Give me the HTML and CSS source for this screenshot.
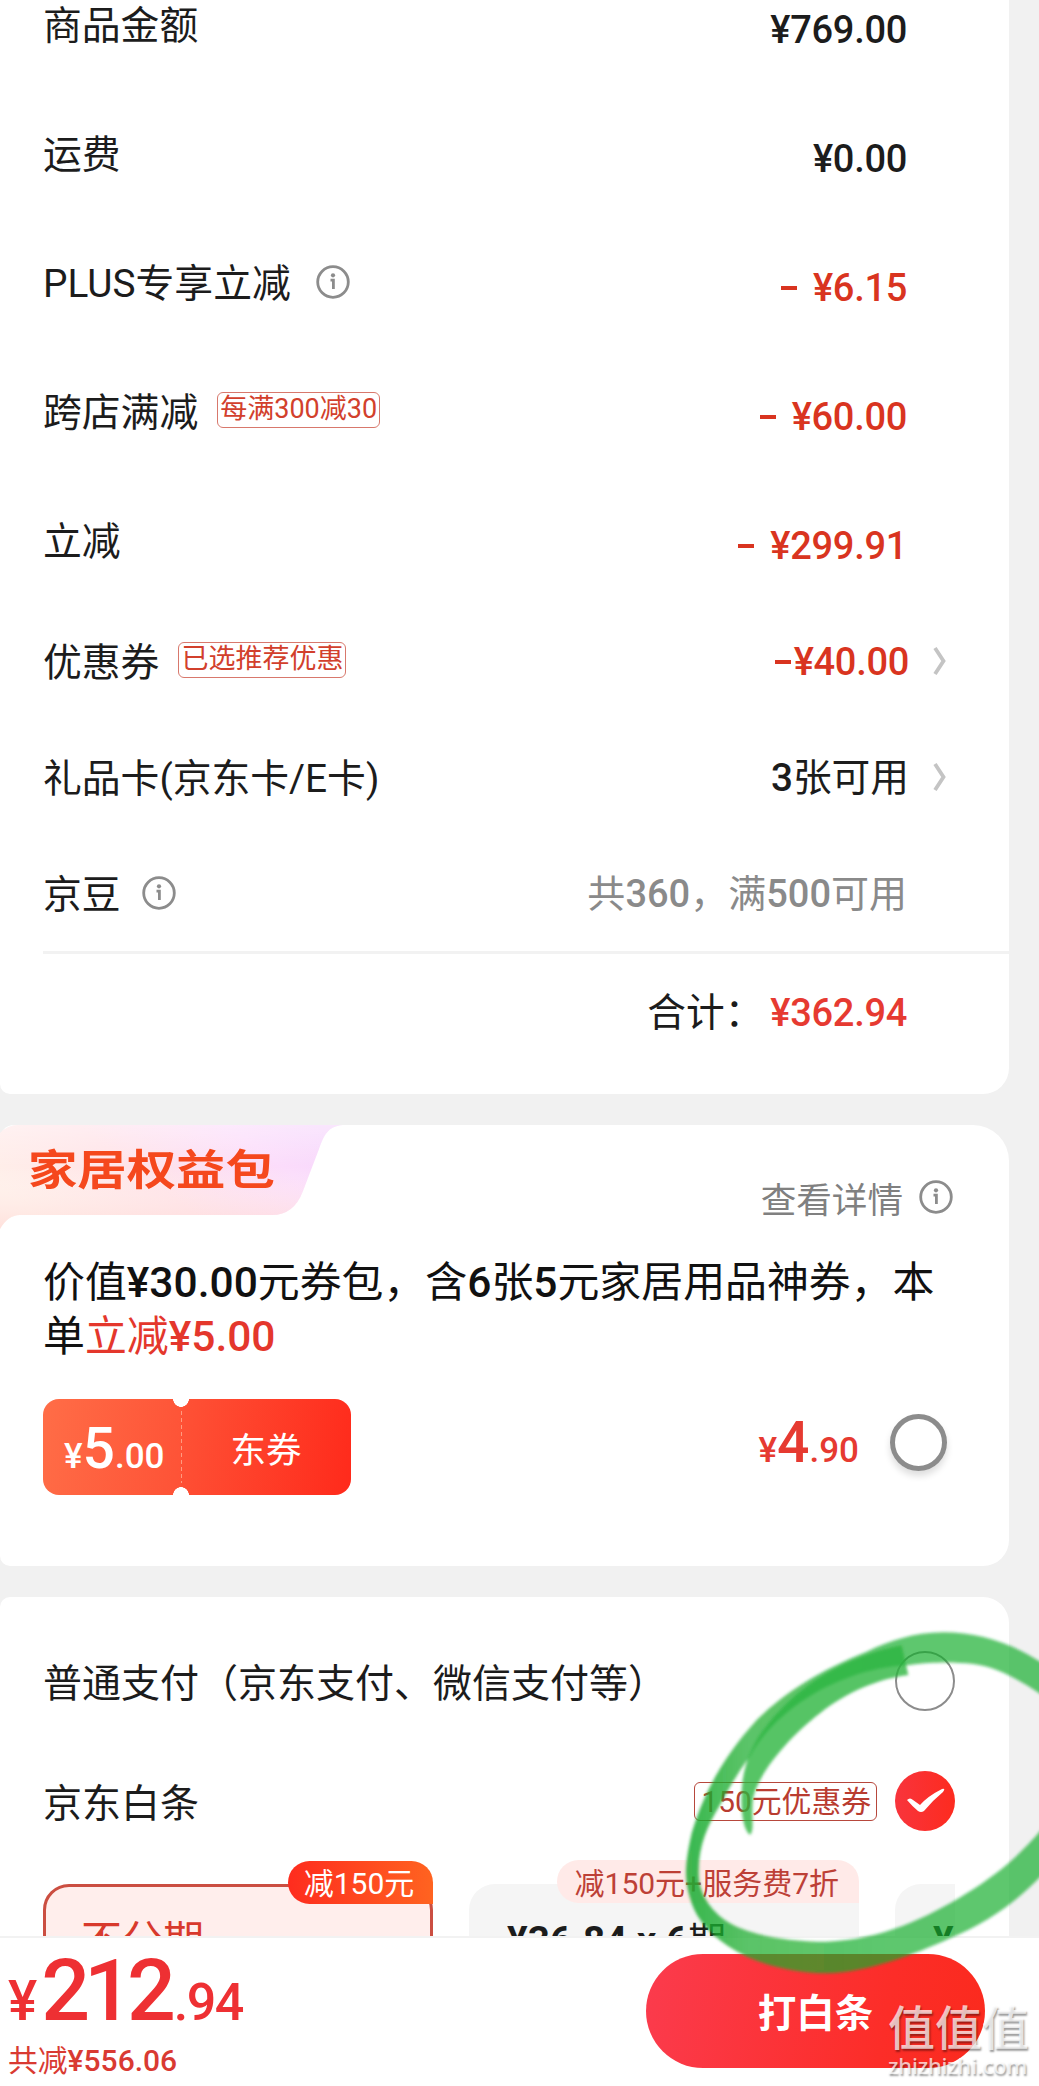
FILE: index.html
```
<!DOCTYPE html>
<html lang="zh-CN">
<head>
<meta charset="utf-8">
<title>确认订单</title>
<link rel="stylesheet" href="styles.css">
</head>
<body>
<svg width="0" height="0" class="defs">
  <symbol id="info" viewBox="0 0 34 34">
    <circle cx="17" cy="17" r="15.3" fill="none" stroke="#8c8c8c" stroke-width="2.8"/>
    <circle cx="17" cy="10.3" r="2.1" fill="#8c8c8c"/>
    <path d="M14.500 15.2H17.400V24" fill="none" stroke="#8c8c8c" stroke-width="2.8"/>
  </symbol>
  <symbol id="chev" viewBox="0 0 14 30">
    <path d="M2 2L10.500 15L2 28" fill="none" stroke="#c4c4c4" stroke-width="3.800"/>
  </symbol>
</svg>
<div class="screen">
  <section class="card summary">
    <div class="row tall"><span class="name">商品金额</span><span class="num">¥769.00</span></div>
    <div class="row tall"><span class="name">运费</span><span class="num">¥0.00</span></div>
    <div class="row tall"><span class="name">PLUS专享立减</span><svg class="info gap-wide"><use href="#info"/></svg><span class="num red"><i class="dash"></i>¥6.15</span></div>
    <div class="row tall"><span class="name">跨店满减</span><span class="tag">每满300减30</span><span class="num red"><i class="dash"></i>¥60.00</span></div>
    <div class="row tall last-tall"><span class="name">立减</span><span class="num red"><i class="dash"></i>¥299.91</span></div>
    <div class="row link"><span class="name">优惠券</span><span class="tag">已选推荐优惠</span><span class="num red"><i class="dash tight"></i>¥40.00</span><svg class="chev"><use href="#chev"/></svg></div>
    <div class="row link"><span class="name">礼品卡(京东卡/E卡)</span><span class="num mixed"><b>3</b>张可用</span><svg class="chev"><use href="#chev"/></svg></div>
    <div class="row"><span class="name">京豆</span><svg class="info"><use href="#info"/></svg><span class="num mixed grey">共<b>360</b>，满<b>500</b>可用</span></div>
    <div class="row total"><span class="total-label">合计：</span><span class="num red bright">¥362.94</span></div>
  </section>

  <section class="card benefit">
    <svg class="banner" viewBox="0 0 343 104">
      <defs>
        <linearGradient id="pink" x1="0" y1="0.6" x2="1" y2="0.2">
          <stop offset="0" stop-color="#fff0e9"/><stop offset=".4" stop-color="#ffe3e8"/><stop offset=".78" stop-color="#fbdcfb"/><stop offset="1" stop-color="#f6d6fc"/>
        </linearGradient>
        <linearGradient id="warm" x1="0" y1="0" x2="0" y2="1">
          <stop offset="0" stop-color="#fff" stop-opacity=".4"/><stop offset=".4" stop-color="#fff" stop-opacity="0"/><stop offset="1" stop-color="#ffd6d3" stop-opacity=".6"/>
        </linearGradient>
      </defs>
      <path d="M0 8Q8 0 18 0H343C328 1 324 10 319 24L303 66Q294 90 272 90H20Q8 90 0 104Z" fill="url(#pink)"/>
      <path d="M0 8Q8 0 18 0H343C328 1 324 10 319 24L303 66Q294 90 272 90H20Q8 90 0 104Z" fill="url(#warm)"/>
    </svg>
    <h2 class="banner-text">家居权益包</h2>
    <div class="detail">查看详情<svg class="info"><use href="#info"/></svg></div>
    <p class="desc">价值<b>¥30.00</b>元券包，含<b>6</b>张<b>5</b>元家居用品神券，本<br>单<span class="red bright">立减<b>¥5.00</b></span></p>
    <div class="offer">
      <div class="coupon">
        <div class="coupon-amt"><span class="price"><small>¥</small>5<small>.00</small></span></div>
        <div class="coupon-kind">东券</div>
      </div>
      <span class="price red bright offer-price"><small>¥</small>4<small>.90</small></span>
      <span class="radio thick"></span>
    </div>
  </section>

  <section class="card pay">
    <div class="pay-row"><span class="name">普通支付（京东支付、微信支付等）</span><span class="radio"></span></div>
    <div class="pay-row"><span class="name">京东白条</span><span class="tag big">150元优惠券</span>
      <svg class="checked" viewBox="0 0 60 60"><defs><linearGradient id="rd" x1="0" x2="1"><stop offset="0" stop-color="#f8343c"/><stop offset="1" stop-color="#fd2b1f"/></linearGradient></defs><circle cx="30" cy="30" r="30" fill="url(#rd)"/><path d="M12 29Q15 26 18 29L25 34Q33 25 47 18Q51 17 48 21Q37 30 29 40Q26 42 23 40Q17 35 12 29Z" fill="#fff"/></svg>
    </div>
    <div class="plans">
      <div class="plan chosen"><span class="badge hot">减150元</span>不分期</div>
      <div class="plan"><span class="badge">减150元+服务费7折</span><b>¥36.84 x 6</b>期</div>
      <div class="plan cut"><b>¥</b></div>
    </div>
  </section>

  <footer class="bar">
    <div class="sum">
      <span class="payable"><small class="yen">¥</small>212<small class="cents">.94</small></span>
      <span class="saved">共减<b>¥556.06</b></span>
    </div>
    <div class="submit">打白条</div>
  </footer>

  <svg class="marker" viewBox="0 0 1557 1488">
    <defs><filter id="soft" x="-5%" y="-5%" width="110%" height="110%"><feGaussianBlur stdDeviation="4"/></filter>
    <linearGradient id="ink" gradientUnits="userSpaceOnUse" x1="500" y1="0" x2="1100" y2="0"><stop offset="0" stop-color="#1cac32" stop-opacity=".86"/><stop offset=".3" stop-color="#18ac2c" stop-opacity=".72"/><stop offset="1" stop-color="#14ac28" stop-opacity=".68"/></linearGradient></defs>
    <g filter="url(#soft)">
      <path fill="url(#ink)" d="M1580 228C1480 160 1380 127 1270 127C1180 128 1110 152 1040 185C900 240 790 310 710 390C610 500 550 610 515 730C490 840 495 880 515 940C540 1010 600 1060 680 1100C760 1135 850 1150 920 1150C1040 1148 1180 1095 1290 1045C1400 1000 1500 930 1580 840L1580 700C1500 800 1420 860 1340 910C1220 985 1080 1050 920 1055C800 1055 700 1035 640 1005C590 980 545 930 537 870C530 780 560 710 600 645C635 580 662 535 690 500C730 420 810 350 900 300C980 260 1060 230 1170 225C1250 215 1300 217 1360 222C1430 230 1510 275 1580 325Z"/>
      <path fill="#2cb540" fill-opacity=".8" d="M1145 165C1000 195 880 260 790 350C720 420 680 490 668 570C660 640 665 715 690 735C705 720 692 680 700 620C720 540 820 430 900 370C980 305 1080 265 1165 255Z"/>
    </g>
  </svg>
  <div class="watermark"><span class="wm-name">值值值</span><span class="wm-url">zhizhizhi.com</span></div>
</div>
</body>
</html>
```
FILE: styles.css
```
* { box-sizing: border-box; }
body { margin: 0; background: #f1f1f1; font-family: "Noto Sans CJK SC", sans-serif; color: #1c1c1c; }
.defs { position: absolute; }
.screen { position: relative; width: 1039px; height: 2086px; overflow: hidden; display: flex; flex-direction: column; }
.card { width: 1009px; background: #fff; flex: none; }
.summary { height: 1094px; border-radius: 0 0 26px 10px; overflow: hidden; margin-bottom: 31px; padding-left: 43px; }
.row { display: flex; align-items: center; height: 116px; padding-right: 102px; font-size: 38.7px; line-height: 58px; white-space: nowrap; }
.row.tall { height: 129px; }
.row.tall:first-child { margin-top: -39px; }
.last-tall { margin-bottom: -2px; }
.row.link { padding-right: 62px; }
.name { font-size: 38.8px; line-height: 58px; white-space: nowrap; font-family: Roboto, "Noto Sans CJK SC", sans-serif; padding-top: 1px; }
.num { margin-left: auto; font: 500 38px/58px Roboto, "Noto Sans CJK SC", sans-serif; letter-spacing: -.3px; padding-top: 9px; display: flex; align-items: center; }
.red { color: #d93420; }
.bright { color: #e63a31; }
.dash { width: 16px; height: 4px; background: currentColor; margin-right: 16px; }
.dash.tight { margin-right: 3px; }
.link .num, .row:nth-child(8) .num { padding-top: 0; }
.num.mixed { display: block; font-weight: 400; font-size: 38.7px; letter-spacing: 0; }
.num.grey { font-size: 38px; }
.num b, .desc b, .plan b, .saved b { font-family: Roboto, sans-serif; font-weight: 500; }
.grey { color: #8a8a8a; }
.info { width: 34px; height: 34px; margin-left: 21px; margin-top: -3px; flex: none; }
.gap-wide { margin-left: 25px; }
.chev { width: 14px; height: 30px; margin-left: 24px; margin-top: -3px; flex: none; }
.tag { height: 36px; border: 1px solid #d8786c; border-radius: 6px; margin: -5px 0 0 19px; padding: 0 2px; color: #d2402c; font: 400 27px/33px Roboto, "Noto Sans CJK SC", sans-serif; }
.total { border-top: 3px solid #f2f2f2; height: 120px; margin-top: -1px; padding-bottom: 7px; }
.total-label { margin-left: auto; }
.total .num { margin-left: 7px; padding-top: 7px; }

.benefit { position: relative; height: 441px; border-radius: 14px 36px 26px 10px; margin-bottom: 31px; padding: 46px 60px 0 43px; }
.banner { position: absolute; left: 0; top: 0; width: 343px; height: 104px; }
.banner-text { position: absolute; left: 28px; top: 12px; margin: 0; font-size: 42px; line-height: 60px; font-weight: 700; color: #f5481d; transform: scaleX(1.175); transform-origin: left; white-space: nowrap; }
.detail { display: flex; justify-content: flex-end; align-items: center; height: 52px; color: #808080; font-size: 35.6px; margin-right: -4px; }
.detail .info { margin-left: 16px; margin-top: 0; }
.desc { margin: 29px -30px 0 0; font-size: 41.900px; line-height: 54px; color: #111; }
.desc b { font-size: 42.500px; line-height: 0; }
.desc .red { color: #e4372c; }
.offer { display: flex; align-items: center; margin-top: 39px; height: 96px; }
.coupon { width: 308px; height: 96px; display: flex; color: #fff; }
.coupon-amt { width: 138px; background: radial-gradient(circle 8px at 100% 0, #fff 95%, transparent), radial-gradient(circle 8px at 100% 100%, #fff 95%, transparent), linear-gradient(100deg, #ff6d47, #fe5236); border-radius: 16px 0 0 16px; padding-left: 21px; }
.coupon-kind { flex: 1; background: radial-gradient(circle 8px at 0 0, #fff 95%, transparent), radial-gradient(circle 8px at 0 100%, #fff 95%, transparent), repeating-linear-gradient(#ff9a80 0 4px, transparent 4px 7px) 0 12px / 1px 72px no-repeat, linear-gradient(100deg, #fe5236, #ff2a1b); border-radius: 0 16px 16px 0; font-size: 35.500px; line-height: 97px; text-align: center; }
.price { font: 500 57px/100px Roboto, sans-serif; white-space: nowrap; }
.price small { font-size: 35px; }
.offer-price { margin-left: auto; margin-right: 31px; }
.radio { width: 60px; height: 60px; border: 2px solid #8c8c8c; border-radius: 50%; flex: none; margin-left: auto; }
.radio.thick { width: 57px; height: 57px; border-width: 5px; margin: -10px 2px 0 0; box-shadow: 0 5px 7px #0002; }

.pay { height: 339px; border-radius: 10px 26px 0 0; padding: 24px 54px 0 43px; overflow: hidden; }
.pay-row { display: flex; align-items: center; height: 120px; }
.pay-row .name { font-size: 39px; padding-top: 5px; }
.tag.big { height: 39px; margin: 0 18px 0 auto; padding: 0 5px 0 7px; line-height: 37px; font-size: 29.8px; border-color: #b7473c; color: #b93c30; }
.checked { width: 60px; height: 60px; }
.plans { display: flex; gap: 36px; margin-top: 23px; }
.plan { position: relative; width: 390px; height: 90px; flex: none; background: #f5f5f5; border-radius: 26px 0 0 0; padding: 24px 0 0 38px; font-size: 38px; line-height: 60px; white-space: nowrap; color: #1c1c1c; }
.plan b { font-weight: 700; font-size: 38.500px; }
.plan.chosen { background: #ffeeec; border: 3px solid #cb4e41; border-radius: 26px 26px 0 0; padding: 20px 0 0 35px; font-size: 41px; color: #d8392c; }
.plan.cut { width: 60px; overflow: hidden; }
.badge { position: absolute; right: 0; top: -24px; height: 43px; border-radius: 22px 22px 0 22px; padding: 0 20px 0 18px; background: #ffeae8; color: #bd4036; font: 400 30px/47px Roboto, "Noto Sans CJK SC", sans-serif; }
.badge.hot { right: -3px; top: -26px; width: 145px; padding: 0 3px 0 0; text-align: center; background: linear-gradient(90deg, #fe2c1e, #ff6320); color: #fff; border-bottom-right-radius: 0; font-size: 30px; line-height: 45px; }

.bar { height: 150px; background: #fff; border-top: 2px solid #f2f2f2; display: flex; justify-content: space-between; padding: 16px 54px 0 8px; flex: none; }
.sum { display: flex; flex-direction: column; color: #ee3033; }
.payable { font: 500 86px/76px Roboto, sans-serif; height: 76px; margin-top: -1px; letter-spacing: -6px; white-space: nowrap; }
.payable small { font-size: 52px; letter-spacing: -1.500px; }
.payable .yen { font-size: 55px; letter-spacing: 4px; }
.payable .cents { margin-left: 4px; }
.saved { font-size: 29.800px; line-height: 44px; margin-top: 7px; color: #d93a32; white-space: nowrap; }
.saved b { line-height: 0; font-size: 30px; }
.submit { width: 339px; height: 114px; border-radius: 57px; background: linear-gradient(100deg, #fb3b4d, #fc2d28 70%, #fb2a1d); color: #fff; font-size: 38.500px; line-height: 113px; font-weight: 700; text-align: center; }
.marker { position: absolute; left: 520px; top: 1590px; width: 519px; height: 496px; }
.watermark { position: absolute; left: 888px; top: 1997px; width: 151px; display: flex; flex-direction: column; color: #ffffffb8; text-shadow: 1px 2px 2px #0006; white-space: nowrap; }
.wm-name { font-size: 47px; line-height: 56px; font-weight: 500; }
.wm-url { font: 500 22px/24px "Noto Sans", sans-serif; letter-spacing: -.2px; }
```
